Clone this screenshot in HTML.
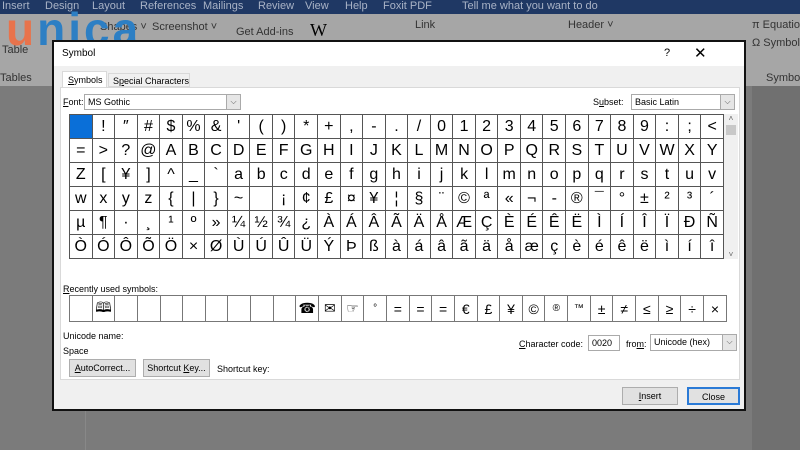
<!DOCTYPE html>
<html><head><meta charset="utf-8">
<style>
*{margin:0;padding:0;box-sizing:border-box}
body{width:800px;height:450px;overflow:hidden;background:#7b7b7b;font-family:"Liberation Sans",sans-serif;position:relative}
.abs{position:absolute;white-space:nowrap}
.topbar{left:0;top:0;width:800px;height:14px;background:#1f3864;color:#a9b3c6;font-size:11px}
.topbar span{position:absolute;top:0}
.ribbon{left:0;top:14px;width:800px;height:72px;background:#a6a6a6;color:#333;font-size:11px}
.doc{left:0;top:86px;width:800px;height:364px;background:#7b7b7b}
.dlg{left:52px;top:40px;width:694px;height:371px;background:#f0f0f0;border:2px solid #111;font-size:9px;color:#000}
.title{left:0;top:0;width:690px;height:24px;background:#fff}
.panel{left:6px;top:45px;width:680px;height:293px;background:#fff;border:1px solid #d9d9d9}
table{border-collapse:collapse;position:absolute;table-layout:fixed}
.g td{height:24px;border:1px solid #555;text-align:center;font-size:16px;font-family:"Liberation Sans","DejaVu Sans",sans-serif;padding:0;overflow:hidden}
.r td{height:26px;border:1px solid #777;text-align:center;font-size:14px;padding:0;overflow:hidden}
.btn{background:#e1e1e1;border:1px solid #adadad;text-align:center;line-height:16px;font-size:9px}
.combo{background:#fff;border:1px solid #aaa;font-size:9px;line-height:14px;padding-left:3px}
.dd{position:absolute;right:0;top:0;width:14px;height:100%;background:#e6e6e6;border-left:1px solid #aaa;text-align:center;font-size:8px;color:#555}
</style></head><body>
<div class="abs topbar"><span style="left:2px">Insert</span><span style="left:45px">Design</span><span style="left:92px">Layout</span><span style="left:140px">References</span><span style="left:203px">Mailings</span><span style="left:258px">Review</span><span style="left:305px">View</span><span style="left:345px">Help</span><span style="left:383px">Foxit PDF</span><span style="left:462px">Tell me what you want to do</span></div>
<div class="abs ribbon">
<span class="abs" style="left:2px;top:30px">Table</span><span class="abs" style="left:0;top:58px">Tables</span>
<span class="abs" style="left:100px;top:7px">Shapes ˅</span><span class="abs" style="left:152px;top:7px">Screenshot ˅</span>
<span class="abs" style="left:236px;top:12px;font-size:11px">Get Add-ins</span>
<span class="abs" style="left:310px;top:6px;font-family:'Liberation Serif';font-size:18px;color:#000">W</span>
<span class="abs" style="left:415px;top:5px">Link</span><span class="abs" style="left:568px;top:5px">Header ˅</span>
<span class="abs" style="left:752px;top:5px">π Equation</span><span class="abs" style="left:752px;top:23px">Ω Symbol</span>
<span class="abs" style="left:766px;top:58px">Symbols</span>
</div>
<div class="abs" style="left:6px;top:2px;font-size:46px;font-weight:bold;letter-spacing:3px;color:#e8734c">u<span style="color:#2d7fc4">nica</span></div>
<div class="abs doc"><div class="abs" style="left:85px;top:0;width:1px;height:364px;background:#888"></div><div class="abs" style="left:752px;top:0;width:48px;height:364px;background:#707070"></div></div>

<div class="abs dlg">
<div class="abs title"><span class="abs" style="left:8px;top:6px;font-size:10px">Symbol</span><span class="abs" style="left:610px;top:5px;font-size:11px">?</span><span class="abs" style="left:640px;top:2px;font-size:15px">✕</span></div>
<div class="abs" style="left:8px;top:29px;width:45px;height:17px;background:#fff;border:1px solid #d9d9d9;border-bottom:none;padding:3px 0 0 5px"><u>S</u>ymbols</div>
<div class="abs" style="left:54px;top:31px;width:82px;height:14px;border:1px solid #d9d9d9;padding:2px 0 0 4px;white-space:nowrap">S<u>p</u>ecial Characters</div>
<div class="abs panel">
<span class="abs" style="left:2px;top:9px"><u>F</u>ont:</span>
<div class="abs combo" style="left:23px;top:6px;width:157px;height:16px">MS Gothic<div class="dd">⌵</div></div>
<span class="abs" style="left:532px;top:9px">S<u>u</u>bset:</span>
<div class="abs combo" style="left:570px;top:6px;width:104px;height:16px">Basic Latin<div class="dd">⌵</div></div>
<table class="g" style="left:8px;top:26px;width:655px">
<tr><td style="background:#0a6fd8"></td><td>!</td><td>″</td><td>#</td><td>$</td><td>%</td><td>&amp;</td><td>'</td><td>(</td><td>)</td><td>*</td><td>+</td><td>,</td><td>-</td><td>.</td><td>/</td><td>0</td><td>1</td><td>2</td><td>3</td><td>4</td><td>5</td><td>6</td><td>7</td><td>8</td><td>9</td><td>:</td><td>;</td><td>&lt;</td></tr>
<tr><td>=</td><td>&gt;</td><td>?</td><td>@</td><td>A</td><td>B</td><td>C</td><td>D</td><td>E</td><td>F</td><td>G</td><td>H</td><td>I</td><td>J</td><td>K</td><td>L</td><td>M</td><td>N</td><td>O</td><td>P</td><td>Q</td><td>R</td><td>S</td><td>T</td><td>U</td><td>V</td><td>W</td><td>X</td><td>Y</td></tr>
<tr><td>Z</td><td>[</td><td>¥</td><td>]</td><td>^</td><td>_</td><td>`</td><td>a</td><td>b</td><td>c</td><td>d</td><td>e</td><td>f</td><td>g</td><td>h</td><td>i</td><td>j</td><td>k</td><td>l</td><td>m</td><td>n</td><td>o</td><td>p</td><td>q</td><td>r</td><td>s</td><td>t</td><td>u</td><td>v</td></tr>
<tr><td>w</td><td>x</td><td>y</td><td>z</td><td>{</td><td>|</td><td>}</td><td>~</td><td></td><td>¡</td><td>¢</td><td>£</td><td>¤</td><td>¥</td><td>¦</td><td>§</td><td>¨</td><td>©</td><td>ª</td><td>«</td><td>¬</td><td>-</td><td>®</td><td>¯</td><td>°</td><td>±</td><td>²</td><td>³</td><td>´</td></tr>
<tr><td>µ</td><td>¶</td><td>·</td><td>¸</td><td>¹</td><td>º</td><td>»</td><td>¼</td><td>½</td><td>¾</td><td>¿</td><td>À</td><td>Á</td><td>Â</td><td>Ã</td><td>Ä</td><td>Å</td><td>Æ</td><td>Ç</td><td>È</td><td>É</td><td>Ê</td><td>Ë</td><td>Ì</td><td>Í</td><td>Î</td><td>Ï</td><td>Ð</td><td>Ñ</td></tr>
<tr><td>Ò</td><td>Ó</td><td>Ô</td><td>Õ</td><td>Ö</td><td>×</td><td>Ø</td><td>Ù</td><td>Ú</td><td>Û</td><td>Ü</td><td>Ý</td><td>Þ</td><td>ß</td><td>à</td><td>á</td><td>â</td><td>ã</td><td>ä</td><td>å</td><td>æ</td><td>ç</td><td>è</td><td>é</td><td>ê</td><td>ë</td><td>ì</td><td>í</td><td>î</td></tr>
</table>
<div class="abs" style="left:663px;top:26px;width:14px;height:145px;background:#f0f0f0;font-size:8px;text-align:center;color:#666">˄<div style="margin:2px 2px;height:10px;background:#c8c8c8"></div><div style="position:absolute;bottom:0;width:14px">˅</div></div>
<span class="abs" style="left:2px;top:196px"><u>R</u>ecently used symbols:</span>
<table class="r" style="left:8px;top:207px;width:658px">
<tr><td></td><td>🕮</td><td></td><td></td><td></td><td></td><td></td><td></td><td></td><td></td><td>☎</td><td>✉</td><td>☞</td><td style="font-size:10px">°</td><td>=</td><td>=</td><td>=</td><td>€</td><td>£</td><td>¥</td><td>©</td><td style="font-size:10px">®</td><td style="font-size:10px">™</td><td>±</td><td>≠</td><td>≤</td><td>≥</td><td>÷</td><td>×</td></tr>
</table>
<span class="abs" style="left:2px;top:243px">Unicode name:</span>
<span class="abs" style="left:2px;top:258px">Space</span>
<span class="abs" style="left:458px;top:251px"><u>C</u>haracter code:</span>
<div class="abs combo" style="left:527px;top:247px;width:32px;height:16px">0020</div>
<span class="abs" style="left:565px;top:251px">fro<u>m</u>:</span>
<div class="abs combo" style="left:589px;top:246px;width:87px;height:17px">Unicode (hex)<div class="dd">⌵</div></div>
<div class="abs btn" style="left:8px;top:271px;width:67px;height:18px"><u>A</u>utoCorrect...</div>
<div class="abs btn" style="left:82px;top:271px;width:67px;height:18px">Shortcut <u>K</u>ey...</div>
<span class="abs" style="left:156px;top:276px">Shortcut key:</span>
</div>
<div class="abs btn" style="left:568px;top:345px;width:56px;height:18px"><u>I</u>nsert</div>
<div class="abs btn" style="left:633px;top:345px;width:53px;height:18px;border:2px solid #2a7ad6">Close</div>
</div>
</body></html>
